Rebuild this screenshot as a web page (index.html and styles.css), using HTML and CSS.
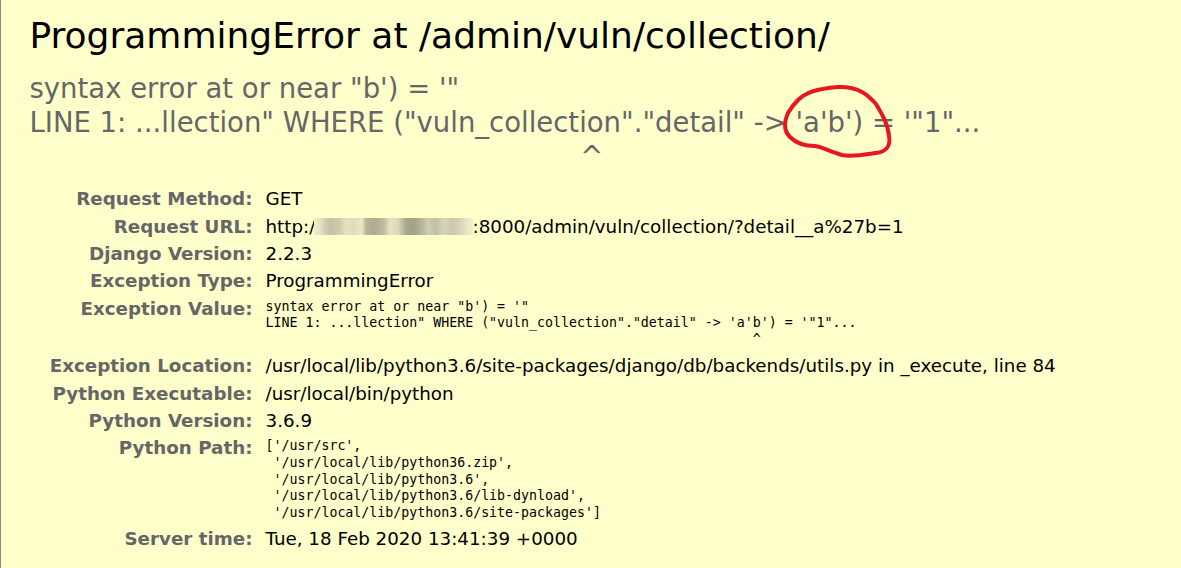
FILE: index.html
```html
<!DOCTYPE html>
<html>
<head>
<meta charset="utf-8">
<title>ProgrammingError at /admin/vuln/collection/</title>
<link rel="stylesheet" href="styles.css">
</head>
<body>
<div class="summary">
  <h1>ProgrammingError at /admin/vuln/collection/</h1>
  <pre class="exception-value">syntax error at or near "b') = '"
LINE 1: ...llection" WHERE ("vuln_collection"."detail" -&gt; 'a'b') = '"1"...
                                                               ^</pre>
  <table class="meta">
    <tr><th>Request Method:</th><td>GET</td></tr>
    <tr><th>Request URL:</th><td>http://<span class="mosaic"></span>:8000/admin/vuln/collection/?detail__a%27b=1</td></tr>
    <tr><th>Django Version:</th><td>2.2.3</td></tr>
    <tr><th>Exception Type:</th><td>ProgrammingError</td></tr>
    <tr><th>Exception Value:</th><td><pre>syntax error at or near "b') = '"
LINE 1: ...llection" WHERE ("vuln_collection"."detail" -&gt; 'a'b') = '"1"...
                                                             ^
</pre></td></tr>
    <tr><th>Exception Location:</th><td>/usr/local/lib/python3.6/site-packages/django/db/backends/utils.py in _execute, line 84</td></tr>
    <tr><th>Python Executable:</th><td>/usr/local/bin/python</td></tr>
    <tr><th>Python Version:</th><td>3.6.9</td></tr>
    <tr><th>Python Path:</th><td><pre>['/usr/src',
 '/usr/local/lib/python36.zip',
 '/usr/local/lib/python3.6',
 '/usr/local/lib/python3.6/lib-dynload',
 '/usr/local/lib/python3.6/site-packages']</pre></td></tr>
    <tr><th>Server time:</th><td>Tue, 18 Feb 2020 13:41:39 +0000</td></tr>
  </table>
</div>
<svg class="annotation" width="1181" height="568" viewBox="0 0 1181 568" xmlns="http://www.w3.org/2000/svg">
  <path d="M797 101 C806 92 816 89 838 87 C858 86 868 95 876 104 C882 114 888 124 889 136 C891 146 886 152 876 153 C862 155 852 157 842 155 C830 152 823 147 815 146 C805 146 796 143 790 137 C784 131 784 122 788 113 C792 106 795 103 799 99" fill="none" stroke="#e8161f" stroke-width="4" stroke-linecap="round" stroke-linejoin="round"/>
</svg>
</body>
</html>
```
FILE: styles.css
```css
html, body {
  margin: 0;
  padding: 0;
}
body {
  font-family: "DejaVu Sans", sans-serif;
  font-size: 18.3px;
  color: #000;
  background: #fff;
  border-left: 1px solid #8a8a8a;
  min-height: 568px;
  box-sizing: border-box;
  position: relative;
}
.summary {
  background: #ffc;
  border-bottom: 1px solid #ddd;
  padding: 15px 28px 17px 28.5px;
}
h1 {
  margin: 0;
  font-size: 36px;
  font-weight: normal;
  line-height: 42px;
}
.exception-value {
  margin: 13.5px 0 0 0;
  font-family: "DejaVu Sans", sans-serif;
  font-size: 27.5px;
  line-height: 34px;
  color: #666;
  white-space: pre;
}
.meta {
  border-collapse: collapse;
  border: none;
  width: 100%;
  margin: 12.5px 0 0 0;
}
.meta th, .meta td {
  vertical-align: top;
  padding: 3.2px 4px;
  line-height: 21px;
}
.meta th {
  width: 219px;
  text-align: right;
  color: #666;
  padding-right: 9px;
  font-weight: bold;
}
.meta td {
  text-align: left;
}
.meta pre {
  margin: 0;
  font-family: "DejaVu Sans Mono", monospace;
  font-size: 13.28px;
  line-height: 16.7px;
  padding-top: 1px;
}
.mosaic {
  display: inline-block;
  width: 159px;
  height: 17px;
  margin-left: -8px;
  vertical-align: -2px;
  background: linear-gradient(90deg,
    #f1efc9 0px, #e6e4c2 6px, #d5d3b4 10px, #c4c2a4 16px, #cfcdae 26px,
    #e4e2c0 32px, #dedcbb 40px, #e9e7c5 48px,
    #b8b799 52px, #adac8f 60px, #bebd9f 70px,
    #e5e3c1 76px, #dcdabb 84px,
    #a9a88b 92px, #a3a285 100px, #b8b799 108px,
    #cecdaf 114px, #c2c0a3 122px, #d6d4b6 130px,
    #cbc9ab 138px, #d6d4b6 146px, #e6e4c3 152px, #f3f1cb 159px);
  filter: blur(0.7px);
}
.annotation {
  position: absolute;
  left: -1px;
  top: 0;
  pointer-events: none;
}
```
